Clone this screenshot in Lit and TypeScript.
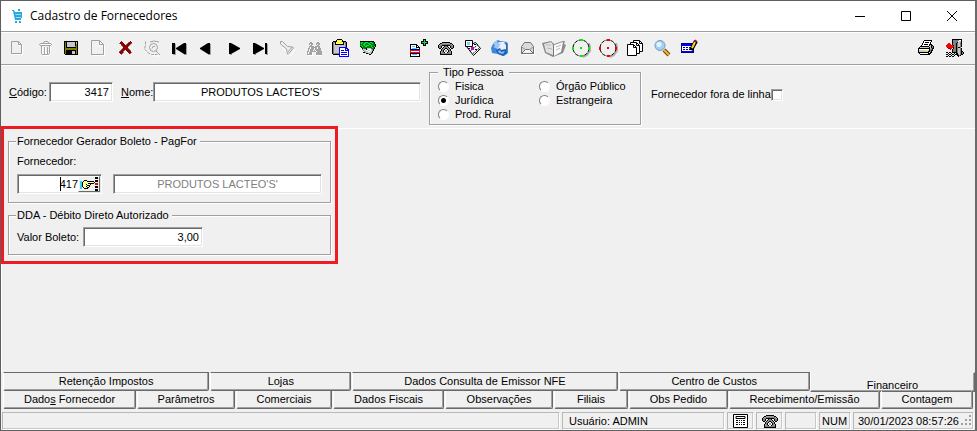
import { LitElement, html, svg, css, nothing, TemplateResult, SVGTemplateResult } from "lit";
import { customElement, property } from "lit/decorators.js";

const PALETTE: Record<string, string> = {
  k: "#000000", w: "#ffffff", g: "#808080", s: "#c8c8c8", a: "#a3a3a3",
  o: "#808000", r: "#ff0000", R: "#900000", y: "#ffff00", Y: "#ffff9c",
  b: "#0000ff", B: "#000080", G: "#008000", l: "#00e050", c: "#30d0ff",
};

/** Turns rows of palette letters into one path per colour. */
function pix(ox: number, oy: number, rows: string[]): SVGTemplateResult {
  const paths: Record<string, string> = {};
  rows.forEach((row, y) => {
    let x = 0;
    while (x < row.length) {
      const ch = row[x];
      let n = 1;
      while (row[x + n] === ch) n++;
      if (PALETTE[ch]) {
        paths[ch] = (paths[ch] ?? "") + `M${ox + x} ${oy + y}h${n}v1h-${n}z`;
      }
      x += n;
    }
  });
  return svg`${Object.entries(paths).map(([c, d]) => svg`<path fill=${PALETTE[c]} d=${d}></path>`)}`;
}

const PHONE = [
  "....kkkkkkkk....",
  "..kkaaaaaaaakk..",
  ".kaagggggggggak.",
  "kaggkkkkkkkkggak",
  "kggk..kggk..kggk",
  "kggk.kaggak.kggk",
  ".kk.kagkkgak.kk.",
  "...kagkwwkgak...",
  "...kgkwaawkgk...",
  "..kagkwaawkgak..",
  "..kaggkwwkggak..",
  "..kggggggggggk..",
  "..kkkkkkkkkkkk..",
];

const target = (dot: string) => svg`
  <path fill="none" stroke="#b0b0b0" stroke-width="2" d="M21 7l1 4v4l-3 4-4 2"></path>
  <circle cx="13" cy="12" r="8" fill="#f0f0f0" stroke="#000" stroke-dasharray="4 1"></circle>
  <path fill=${dot} d="M12 3h3v2h-3zM12 19h3v2h-3zM4 11h2v3H4zM20 11h2v3h-2zM12 11h2v2h-2z"></path>`;

const ICONS: Record<string, SVGTemplateResult> = {
  page: svg`<g fill="none"><path stroke="#fff" d="M8.500 18.500h10V9M15 6v4h3"></path>
    <path stroke="#a0a0a0" d="M7.500 5.500h7l3 3v9h-10zM14.500 5.500v3h3"></path></g>`,
  trash: pix(8, 5, [
    ".....aaaa....", "....a....a...", ".aaaaaaaaaaa.", "awwwwwwwwwwwa", ".aaaaaaaaaaa.",
    "..a.......aw.", "..aw.aw.a.aw.", "..aw.aw.a.aw.", "..aw.aw.a.aw.", "..aw.aw.a.aw.",
    "..aw.aw.a.aw.", "..aw.aw.a.aw.", "..aw.aw.a.aw.", "...aaaaaaaw..", "....wwwwww...",
  ]),
  save: pix(6, 5, [
    "kkkkkkkkkkkkkk", "kokssssssssksk", "kokssssssssksk", "kokssssssssкok".replace("\u043a", "k"),
    "kokssssssssok.".replace("ok.", "kok"), "kokssssssssook", "kokkkkkkkkkkok", "kooooooooooook",
    "kooooooooooook", "kokkkkkkkkkkok", "kokkkkkkssskok", "kokkkkkkssskok",
    "kokkkkkkssskok", ".kkkkkkkkkkkkk",
  ]),
  sheet: svg`<g fill="none"><path stroke="#fff" d="M7.500 19.500h12V9M15 6v4h4"></path>
    <path stroke="#a0a0a0" d="M6.500 4.500h8l4 4v10h-12zM14.500 4.500v4h4"></path></g>`,
  cancel: pix(7, 5, [
    "..R........R.", ".RRR.....gRRR", "gRRRR...gRRRg", "..RRRR.gRRRg.", "..gRRRRRRRg..",
    "...gRRRRRg...", "....RRRRR....", "...gRRRRRg...", "..gRRRRRRRg..", ".gRRRg.RRRRg.",
    "gRRRg...RRRR.", "RRRRg....RRRg", ".RRg......Rg.", "..g..........",
  ]),
  lookup: svg`<g fill="none"><path stroke="#fff" d="M6 15l3 2 6 3h6"></path>
    <path stroke="#a0a0a0" stroke-dasharray="3 1" d="M6.500 5.500v4l-1 3 3 4 4 2h6"></path>
    <circle cx="14.500" cy="11.500" r="4" stroke="#a0a0a0"></circle>
    <path stroke="#a0a0a0" d="M13 12.500l1-2h2M11 6l4-1 5 1M17 15l4 4"></path></g>`,
  first: svg`<path fill="#a0a0a0" d="M9 8h1v11H7v-1h2zM20 8h1v11h-3v-1h2z"></path><path fill="#000" d="M6 7h3v11H6zM20 7v11h-2L10 13v-1l8-5z"></path>`,
  prev: svg`<path fill="#a0a0a0" d="M17 8h1v11h-3v-1h2z"></path><path fill="#000" d="M17 7v11h-2L7 13v-1l8-5z"></path>`,
  next: svg`<path fill="#000" d="M9 7h2l9 5v1l-9 5H9z"></path><path fill="#a0a0a0" d="M10 18h2v1h-2z"></path>`,
  last: svg`<path fill="#000" d="M6 7h2l9 5v1l-9 5H6zM18 7h2v11h-2z"></path><path fill="#a0a0a0" d="M20 8h1v11h-2v-1h1zM7 18h2v1H7z"></path>`,
  torch: svg`<g fill="none"><path stroke="#fff" d="M8 11l7 7v1h2l4-6"></path>
    <path stroke="#a0a0a0" d="M6.500 5.500h2l5 5 5 .500 1 1-5 6h-1l-1-5-6-5zM18 11l-4 5"></path></g>`,
  binoculars: pix(6, 6, [
    "...aa.....aa...", "..aaaa...aaaa..", "..awaa...awaa..", "...aa.....aa...", "..aaaaa.aaaaa..",
    "..awaaaaaawaa..", ".aawaaawaawaaa.", ".awaaaawaaaaaa.", ".awaaawawaaaaa.", "aawaaaaaawaaaaa",
    "awaaaw..waaaaaa", "awaaaw..waaaaaa", "aaaaaw..waaaaaa", ".wwwww...wwwww.",
  ]),
  paste: pix(4, 3, [
    ".....kkkkk........", "....kyyyyyk.......", ".kkkkywwwykkkk....", "kggkyyyyyyykggk...", "kgskYYYYYYYksgk...",
    "kgskkkkkkkkksgk...", "kgssssssssssSgk...", "kgsssssssssssgk...", "kgsssssbbbbbbbb...", "kgsssssbwwwwwbbb..",
    "kgsssssbwwwwwbwbb.", "kgsssssbwbbbwbbbb.", "kgsssssbwwwwwwwwb.", "kgsssssbwbbbbbbwb.", "kggggggbwwwwwwwwb.",
    ".kkkkkkbwbbbbbbwb.", ".......bwwwwwwwwb.", ".......bbbbbbbbbb.",
  ].map((r) => r.replace("S", "s"))),
  money: pix(5, 5, [
    "kkkkkkkkkkkkkk..", "GllGGlllGGllGGk.", "GlGGllGGllGGlGk.", "GGGllGGGGllGGGGk", "GlGGlGlllGGlGGGk",
    "kGlGGllGGGGlGGlk", ".kGGGGGGGGGGlGk.", "..kgGGkssssGGGk.", "..gssskswwwsgk..", "...gsswwsswsgk..",
    "....gssswwssk...", "...kkgsssssgk...", "......kkgssk....", ".........kk.....",
  ]),
  addDoc: pix(4, 3, [
    ".............kkk..", ".............klk..", "...........kkklkkk", "...........klllllk", "...........kkklkkk",
    "kkkkkkk......klk..", "kwwwwwkk.....kkk..", "kwcccwkwk.........", "kwwwwwkkkk........", "kwcccccwwk........",
    "kBBBBBBBBB........", "rrrrrrrrrr........", "rwwwwwwwwr........", "rrrrrrrrrr........", "kBBBBBBBBk........",
    "kwcccccwwk........", "kwwwwwwwwk........", "kkkkkkkkkk........",
  ]),
  phone: pix(5, 6, PHONE),
  cards: svg`<g stroke="#000"><path fill="#fff" d="M6.500 10.500l9-4 5 6-7 7z"></path>
    <path fill="#fff" d="M5.500 4.500h7v6h-7z"></path><path fill="none" stroke-dasharray="2 1" d="M13 17.500l7-6M10 15.500l8-7"></path></g>
    <path fill="#70d8e8" d="M7 6h3v3H7z"></path><path fill="#000" d="M14 8h2v1h-2zM8 12h2v1H8zM15 13h2v1h-2z"></path>
    <path fill="#d000d0" d="M11 11h3v3h-3z"></path>`,
  refresh: svg`<path fill="#3f86d8" d="M6 8l5-4 2 1 7 1 1 2v9l-4 3-6-2-6-1-1-5z"></path>
    <path fill="#e8f0fa" d="M12 6h5l2 2v8l-6 1-3-2V9z"></path><path fill="#9cc6f5" d="M6 7l4-3 1 4 3-1-3 6-5-2 2-1z"></path>
    <path fill="#1d5fb4" d="M9 14l4-2 1 2 5-1 1 4-4 3-5-2z"></path><path fill="#8fbef2" d="M11 15l2-1 1 2 4-1-2 3-4-1z"></path>
    <path fill="#4a5f80" d="M17 7l3 1v6l-1-1V9z"></path>`,
  envelope: svg`<path fill="#fff" d="M8 19h13V11h-1z"></path><path fill="#dadada" stroke="#707070" d="M7.500 17.500v-7l3-4h6l3 4v7z"></path>
    <path fill="#f4f4f4" stroke="#707070" d="M7.500 17.500l4-4h4l4 4z"></path><path stroke="#909090" fill="none" d="M7.500 11l4 2.500M19.500 11l-4 2.500"></path>`,
  book: svg`<path fill="#8a8a8a" d="M1 7l9-2 3 3 9-3h2l-1 3 2 1-3 8-10 4-8-4z"></path>
    <path fill="#e2e2e2" d="M3 8l7-2 2 3v10l-7-3z"></path><path fill="#fafafa" d="M13 9l9-3-2 10-7 4z"></path>
    <path fill="none" stroke="#b8b8b8" d="M5 9h5M6 12l5 1M15 11l5-2M15 14l4-2"></path>
    <path fill="none" stroke="#777" d="M12.500 9v11"></path>`,
  targetGreen: target("#00f000"),
  targetRed: target("#f00000"),
  pages: svg`<g fill="#fff" stroke="#000"><path d="M11.500 4.500h6l3 3v8h-9z"></path><path fill="none" d="M17.500 4.500v3h3"></path>
    <path d="M8.500 6.500h6l3 3v8h-9z"></path><path fill="none" d="M14.500 6.500v3h3"></path>
    <path d="M5.500 8.500h6l3 3v8h-9z"></path><path fill="none" d="M11.500 8.500v3h3"></path></g>`,
  magnifier: svg`<path stroke="#6b4a10" stroke-width="4" d="M15 14l5 5"></path><path stroke="#f2b632" stroke-width="2" d="M15 14l5 5"></path>
    <circle cx="11" cy="9.500" r="5" fill="#9fd0f8" stroke="#7898bc"></circle><circle cx="10" cy="8.500" r="2.500" fill="#e4f4ff"></circle>`,
  editForm: svg`${pix(5, 7, [
    "BBBBBBBBBBBBB", "BbbbbbbbbbbbB", "BbbbbbbbbbbbB", "BwwwwwwwwwwwB", "BwBBwBBwBBwwB", "BwwwwwwwwwwwB",
    "BwBBwBBwBBwwB", "BwwwwwwwwwwwB", "BbbbbbbbbbbbB", "BBBBBBBBBBBBB",
  ])}<path stroke="#000" stroke-width="4" d="M15 14l5-9"></path>
    <path stroke="#f5e020" stroke-width="2" d="M16 12l3-6"></path><path stroke="#c00060" stroke-width="2" d="M19 6l1-2"></path>`,
  printer: pix(4, 4, [
    "......kkkkkkkk..", ".....kwwwwwwwk..", ".....kwkkkkwk...", "....kwwwwwwwk...", "....kwkkkkwkkk..",
    "...kwwwwwwwkskk.", "..kkkkkkkkksskgk", ".kssssssssskskgk", "kkkkkkkkkkkksgkk", "kwwwwwwwwwwkggk.",
    "kssssssyyyskgkk.", "kssssssssskkgk..", "kkkkkkkkkkkwkk..", ".kwwwwwwwwkkk...", "..kkkkkkkkkk....",
  ]),
  exit: pix(5, 3, [
    "......kkkkkkkkkk..", "......kggggggwwk..", "......kgggggwssk..", "......kggggkssgk..",
    "..rr..kgggkgssgk..", ".rrrr.kgggkgssgk..", "rrrrrrrkggkgssgk..", "rrrrrrrrggkgssgk..", ".RrrrrrkggkgkkgK..",
    "..RRrr.kggkgssgk..", "....R.kgggkgssgk..", "......kgggkgssgk..", "......kgggkgssgkk.", "kk.kk.kkkkkgssgkgk",
    "..k..k..k.kkssgkgk", "kk.kk.kk.kkkgsgkk.", "..k..k..k..kkgk...", "kk.kk.kk....k.....",
  ]),
  hand: pix(2, 3, [
    "....kkk............", "cc.kYYYkkkkkkk.....", "cckYYYYYYYYYYYk....", "cckYYyYYkkkkkk.....",
    "cckYYYkYYYk........", "cckYYYYkkk.........", "cckYYYkYYk.........", "cc.kYYYkk..........", "cc..kkkk...........",
  ]),
};

const FIRST_TOOLS: [string, string, boolean?][] = [
  ["page", "Novo", true], ["trash", "Excluir", true], ["save", "Salvar"], ["sheet", "Limpar", true],
  ["cancel", "Cancelar"], ["lookup", "Consultar", true], ["first", "Primeiro"], ["prev", "Anterior"],
  ["next", "Próximo"], ["last", "Último"], ["torch", "Filtrar", true], ["binoculars", "Localizar", true],
  ["paste", "Colar"], ["money", "Pagamentos"],
];
const SECOND_TOOLS: [string, string, boolean?][] = [
  ["addDoc", "Adicionar documento"], ["phone", "Telefones"], ["cards", "Contatos"], ["refresh", "Atualizar"],
  ["envelope", "Mensagem", true], ["book", "Catálogo"], ["targetGreen", "Ativar"], ["targetRed", "Desativar"],
  ["pages", "Copiar"], ["magnifier", "Pesquisar"], ["editForm", "Editar"],
];

@customElement("app-icon")
class AppIcon extends LitElement {
  @property() name = "";
  static styles = css`
    :host { display: block; width: 27px; height: 24px; }
    svg { display: block; }
  `;
  render() {
    return html`<svg width="27" height="24" viewBox="0 0 27 24" aria-hidden="true">${ICONS[this.name]}</svg>`;
  }
}

@customElement("app-root")
class AppRoot extends LitElement {
  static styles = css`
    :host {
      display: flex;
      flex-direction: column;
      box-sizing: border-box;
      min-height: 100vh;
      background: #f0f0f0;
      border: 1px solid #5f5f5f;
      border-right: 2px solid #6b6b6b;
      font: 11px/13px "Liberation Sans", Arial, sans-serif;
      color: #000;
    }
    * { box-sizing: border-box; }
    button { font: inherit; color: inherit; padding: 0; margin: 0; border: 0; background: none; }
    label, legend, button { white-space: nowrap; }

    .titlebar { display: flex; align-items: center; height: 30px; background: #fff; padding-left: 11px; }
    .titlebar h1 { flex: 1; margin: 0 0 0 7px; font: 12px/16px "Open Sans", "Noto Sans", sans-serif; }
    .titlebar button { width: 46px; height: 30px; display: grid; place-items: center; }

    .toolbar {
      display: flex;
      align-items: center;
      height: 34px;
      padding: 0 7px 0 3px;
      border-top: 1px solid #a0a0a0;
      border-bottom: 1px solid #a0a0a0;
      box-shadow: inset 0 1px #fff;
    }
    .tools { display: flex; margin-right: 24px; }
    .tools.end { margin: 0 0 0 auto; }

    .header { display: flex; height: 63px; padding-left: 8px; gap: 8px; border-top: 1px solid #fff; align-items: flex-start; }
    .field { display: flex; align-items: center; margin-top: 16px; }
    .code-label { width: 40px; }
    .name-label { width: 32px; }

    .edit {
      font: inherit;
      color: #000;
      height: 20px;
      margin: 0;
      padding: 0 3px;
      background: #fff;
      border: 1px solid;
      border-color: #a0a0a0 #fff #fff #a0a0a0;
      border-radius: 0;
      box-shadow: inset 1px 1px #696969, inset -1px -1px #e3e3e3;
      outline: 0;
    }
    .right { text-align: right; }
    .code { width: 64px; }
    .name { width: 268px; padding-left: 47px; }

    fieldset {
      margin: 0;
      padding: 0;
      min-width: 0;
      border: 1px solid #a0a0a0;
      box-shadow: inset 1px 1px #fff, 1px 1px #fff;
    }
    legend { background: #f0f0f0; height: 13px; }
    .kind { width: 212px; padding-bottom: 3px; }
    .kind legend { margin-left: 8px; padding: 0 5px; }
    .kinds { display: grid; grid-template-columns: 101px 1fr; grid-auto-rows: 14px; padding-left: 8px; }
    .kinds label { display: flex; align-items: center; gap: 6px; }
    .kinds .c1 { grid-column: 1; }
    .kinds .c2 { grid-column: 2; }
    .kinds .r1 { grid-row: 1; }
    .kinds .r2 { grid-row: 2; }
    .kinds .r3 { grid-row: 3; }
    input[type="radio"] {
      appearance: none;
      width: 11px;
      height: 11px;
      margin: 0;
      border-radius: 50%;
      border: 1px solid;
      border-color: #808080 #fff #fff #808080;
      background: #fff;
    }
    input[type="radio"]:checked { background: radial-gradient(circle, #000 2px, #fff 3px); }
    .offline { display: flex; align-items: center; margin: 22px 0 0 2px; }
    input[type="checkbox"] {
      appearance: none;
      width: 12px;
      height: 12px;
      margin: 0;
      background: #fff;
      border: 1px solid;
      border-color: #a0a0a0 #fff #fff #a0a0a0;
      box-shadow: inset 1px 1px #696969, inset -1px -1px #e3e3e3;
    }

    main { flex: 1; border-top: 1px solid #fff; border-left: 1px solid #fff; padding-bottom: 16px; }
    .highlight {
      width: 337px;
      margin: -3px 0 0 -1px;
      padding: 6px 4px;
      border: 3px solid #ed1c24;
      background: #f0f0f0;
      display: flex;
      flex-direction: column;
      gap: 6px;
    }
    .box { padding: 0 8px; }
    .box legend { padding: 0 3px 0 1px; margin-left: -1px; }
    .supplier { padding-top: 7px; padding-bottom: 8px; }
    .supplier > label { display: block; height: 12px; margin-bottom: 7px; }
    .row { display: flex; align-items: center; }
    .supplier .row { gap: 11px; }
    .lookup { position: relative; display: flex; width: 85px; padding: 1px; }
    .lookup input { flex: 1; min-width: 0; border: 0; padding: 0; font: inherit; text-align: right; background: none; outline: 0; }
    .lookup button {
      width: 22px;
      height: 16px;
      background: #f0f0f0;
      border: 1px solid;
      border-color: #fff #696969 #696969 #fff;
      overflow: hidden;
    }
    .caret { position: absolute; left: 42px; top: 2px; width: 1px; height: 14px; background: #000; }
    .desc { flex: 1; min-width: 0; color: #808080; text-align: center; }
    .dda { padding-top: 5px; padding-bottom: 7px; }
    .dda label { width: 66px; }
    .amount { width: 120px; }

    .tabs { display: grid; padding: 0 1px 0 2px; }
    .tabs button {
      height: 18px;
      padding-bottom: 1px;
      border: 1px solid;
      border-width: 0 1px 1px;
      border-color: #fff #696969 #696969 #fff;
      box-shadow: inset -1px -1px #a0a0a0;
      border-radius: 0 0 2px 2px;
      margin-right: 1px;
    }
    .upper { grid-template-columns: 207fr 142fr 266fr 192fr 164fr; padding-right: 0; }
    .lower { grid-template-columns: 134fr 99fr 97fr 112fr 109fr 75fr 100fr 152fr 93fr; }
    .tabs.upper button { border-top: 1px solid #696969; height: 19px; }
    .tabs.upper .active { border-top-color: #f0f0f0; padding-top: 6px; border-radius: 0; height: 20px; margin: 0 0 -1px -1px; }

    .status { display: flex; gap: 2px; padding: 3px 1px 0; }
    .status > div {
      height: 18px;
      display: flex;
      align-items: center;
      padding: 0 6px;
      border: 1px solid;
      border-color: #b8b8b8 #fff #fff #b8b8b8;
      box-shadow: inset -1px -1px #c8c8c8;
      white-space: nowrap;
    }
    .status .fill { flex: 1; }
    .status .user { width: 163px; }
    .status .cell { width: 27px; padding: 0; justify-content: center; }
    .status .empty { width: 32px; }
    .status .num { width: 32px; padding: 0 2px; }
    .status .clock { width: 121px; padding: 0 0 0 4px; justify-content: space-between; }
    .status svg { flex: none; }
  `;

  private tool([name, title, disabled]: [string, string, boolean?]): TemplateResult {
    return html`<button type="button" aria-label=${title} ?disabled=${!!disabled}><app-icon name=${name}></app-icon></button>`;
  }

  private kind(label: string, cls: string, checked = false) {
    return html`<label class=${cls}><input type="radio" name="kind" ?checked=${checked}>${label}</label>`;
  }

  private tab(label: unknown, active = false) {
    return html`<button type="button" role="tab" aria-selected=${active} class=${active ? "active" : nothing}>${label}</button>`;
  }

  render() {
    return html`
      <header class="titlebar">
        <svg width="11" height="14" viewBox="0 0 11 14" aria-hidden="true">
          <path fill="#28a8e0" d="M0 1h2l1 2h7v2H3v1h7v2H4v1h5v2H3L1 2H0zM6 0h2v2H6zM3 12h2v2H3zM7 12h2v2H7zM3 4h7v5H4z"></path>
          <path fill="#9fd8f2" d="M4 5h5v1H4zM4 8h5v1H4z"></path>
        </svg>
        <h1>Cadastro de Fornecedores</h1>
        <button type="button" aria-label="Minimizar"><svg width="10" height="10"><path d="M0 5h10v1H0z"></path></svg></button>
        <button type="button" aria-label="Maximizar"><svg width="10" height="10"><path fill="none" stroke="#000" d="M.5.5h9v9h-9z"></path></svg></button>
        <button type="button" aria-label="Fechar"><svg width="10" height="10"><path fill="none" stroke="#000" d="M0 0l10 10M10 0L0 10"></path></svg></button>
      </header>

      <div class="toolbar" role="toolbar">
        <div class="tools">${FIRST_TOOLS.map((t) => this.tool(t))}</div>
        <div class="tools">${SECOND_TOOLS.map((t) => this.tool(t))}</div>
        <div class="tools end">${this.tool(["printer", "Imprimir"])}${this.tool(["exit", "Sair"])}</div>
      </div>

      <section class="header">
        <div class="field">
          <label class="code-label" for="code"><u>C</u>ódigo:</label>
          <input class="edit right code" id="code" value="3417">
        </div>
        <div class="field">
          <label class="name-label" for="name"><u>N</u>ome:</label>
          <input class="edit name" id="name" value="PRODUTOS LACTEO'S'">
        </div>
        <fieldset class="kind">
          <legend>Tipo Pessoa</legend>
          <div class="kinds">
            ${this.kind("Fisica", "c1 r1")}
            ${this.kind("Jurídica", "c1 r2", true)}
            ${this.kind("Prod. Rural", "c1 r3")}
            ${this.kind("Órgão Público", "c2 r1")}
            ${this.kind("Estrangeira", "c2 r2")}
          </div>
        </fieldset>
        <label class="offline">Fornecedor fora de linha<input type="checkbox"></label>
      </section>

      <main>
        <section class="highlight">
          <fieldset class="box supplier">
            <legend>Fornecedor Gerador Boleto - PagFor</legend>
            <label for="supplier">Fornecedor:</label>
            <div class="row">
              <div class="edit lookup">
                <input id="supplier" value="417">
                <span class="caret"></span>
                <button type="button" aria-label="Buscar fornecedor">
                  <svg width="20" height="14" viewBox="1 0 20 14" aria-hidden="true">
                    ${ICONS.hand}
                    <path fill="#000" d="M17 0h3v2h-3zM17 3h3v2h-3zM17 9h3v2h-3zM17 12h3v2h-3z"></path>
                    <path fill="#e00000" d="M17 6h3v2h-3z"></path>
                  </svg>
                </button>
              </div>
              <input class="edit desc" aria-label="Nome do fornecedor" readonly value="PRODUTOS LACTEO'S'">
            </div>
          </fieldset>
          <fieldset class="box dda">
            <legend>DDA - Débito Direto Autorizado</legend>
            <div class="row">
              <label for="amount">Valor Boleto:</label>
              <input class="edit right amount" id="amount" value="3,00">
            </div>
          </fieldset>
        </section>
      </main>

      <nav role="tablist">
        <div class="tabs upper">
          ${this.tab("Retenção Impostos")}${this.tab("Lojas")}${this.tab("Dados Consulta de Emissor NFE")}
          ${this.tab("Centro de Custos")}${this.tab("Financeiro", true)}
        </div>
        <div class="tabs lower">
          ${this.tab(html`Dado<u>s</u> Fornecedor`)}${this.tab("Parâmetros")}${this.tab("Comerciais")}
          ${this.tab("Dados Fiscais")}${this.tab("Observações")}${this.tab("Filiais")}${this.tab("Obs Pedido")}
          ${this.tab("Recebimento/Emissão")}${this.tab("Contagem")}
        </div>
      </nav>

      <footer class="status">
        <div class="fill"></div>
        <div class="user">Usuário: ADMIN</div>
        <div class="cell">
          <svg width="15" height="14" viewBox="0 0 15 14" aria-hidden="true">
            <path fill="#fff" stroke="#000" d="M.5.5h14v13H.5z"></path>
            <path fill="none" stroke="#000" d="M3 2.500h9v2H3z"></path>
            <path fill="#000" d="M3 6h2v1H3zM6 6h1v1H6zM8 6h1v1H8zM10 6h2v1h-2zM3 8h2v1H3zM6 8h1v1H6zM8 8h1v1H8zM10 8h2v1h-2zM3 10h2v1H3zM6 10h1v1H6zM8 10h1v1H8zM10 10h2v1h-2z"></path>
          </svg>
        </div>
        <div class="cell"><svg width="16" height="13" aria-hidden="true">${pix(0, 0, PHONE)}</svg></div>
        <div class="empty"></div>
        <div class="num">NUM</div>
        <div class="clock">30/01/2023 08:57:26
          <svg width="12" height="12" aria-hidden="true"><path fill="#a0a0a0" d="M8 0h2v2H8zM4 4h2v2H4zM8 4h2v2H8zM0 8h2v2H0zM4 8h2v2H4zM8 8h2v2H8z"></path></svg>
        </div>
      </footer>
    `;
  }
}
